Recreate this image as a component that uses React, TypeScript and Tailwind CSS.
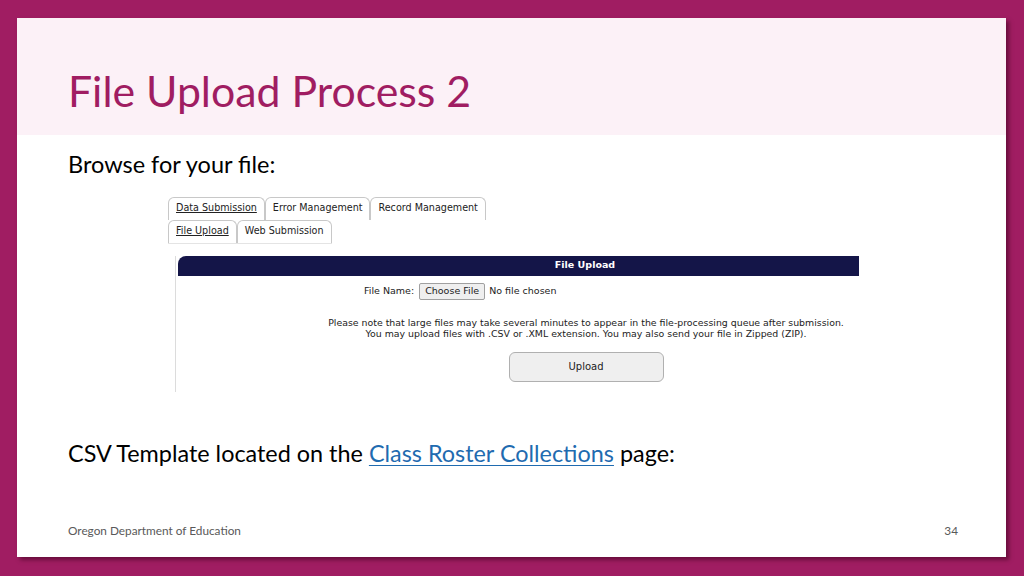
export default function App() {
  const tabCls =
    "border border-b-0 border-[#c8c8c8] rounded-t-[6px] px-[7px] h-[23px] flex items-center whitespace-nowrap bg-white text-[9.6px] text-[#222]";
  return (
    <div className="w-[1024px] h-[576px] bg-[#a01d62] p-[18px_18px_19px_17px] overflow-hidden">
      <div
        className="w-[989px] h-[539px] bg-white flex flex-col shadow-[3px_3px_4px_rgba(60,0,30,0.55)]"
        style={{ fontFamily: "Lato, 'Open Sans', sans-serif" }}
      >
        <div className="h-[117px] bg-[#fcf1f7] flex items-end pl-[51px] pb-[22px]">
          <h1 className="text-[42.8px] leading-none text-[#a01d62]">File Upload Process 2</h1>
        </div>
        <div className="pl-[51px] pt-[18px] text-[23.5px] leading-none text-black">Browse for your file:</div>

        <div
          className="ml-[151px] mt-[20px] flex flex-col"
          style={{ fontFamily: "'DejaVu Sans', Verdana, sans-serif" }}
        >
          <div className="flex">
            <div className={tabCls}><span className="underline">Data Submission</span></div>
            <div className={tabCls}>Error Management</div>
            <div className={tabCls}>Record Management</div>
          </div>
          <div className="flex self-start border-b border-[#e4e4e4]">
            <div className={tabCls}><span className="underline">File Upload</span></div>
            <div className={tabCls}>Web Submission</div>
          </div>

          <div className="mt-[12px] ml-[7px] w-[684px] border-l border-[#dcdcdc] h-[136px] overflow-hidden">
            <div className="w-[816px] flex flex-col">
              <div className="ml-[2px] h-[20px] bg-[#141548] rounded-tl-[8px] flex items-center justify-center text-white text-[9.5px] font-bold">
                File Upload
              </div>
              <div className="mt-[7px] ml-[188px] flex items-center gap-[4px] text-[9.5px] text-[#222]">
                <span>File Name:</span>
                <span className="ml-[1px] border border-[#a0a0a0] bg-[#efefef] px-[5px] h-[17px] flex items-center rounded-[2px]">
                  Choose File
                </span>
                <span>No file chosen</span>
              </div>
              <div className="mt-[17px] text-center text-[9.4px] leading-[11px] text-[#222] pl-[4px]">
                <div>Please note that large files may take several minutes to appear in the file-processing queue after submission.</div>
                <div>You may upload files with .CSV or .XML extension. You may also send your file in Zipped (ZIP).</div>
              </div>
              <div className="mt-[13px] flex justify-center pl-[4px]">
                <div className="w-[155px] h-[30px] border border-[#b0b0b0] rounded-[6px] bg-[#efefef] flex items-center justify-center text-[10px] text-[#222]">
                  Upload
                </div>
              </div>
            </div>
          </div>
        </div>

        <div className="pl-[51px] mt-[50px] text-[23.4px] leading-none text-black">
          CSV Template located on the{" "}
          <span className="text-[#1f6bb0] underline decoration-1 underline-offset-[3px]">Class Roster Collections</span>{" "}
          page:
        </div>

        <div className="mt-auto mb-[17px] pl-[51px] pr-[48px] flex justify-between text-[11.8px] text-[#595959]">
          <span>Oregon Department of Education</span>
          <span>34</span>
        </div>
      </div>
    </div>
  );
}
